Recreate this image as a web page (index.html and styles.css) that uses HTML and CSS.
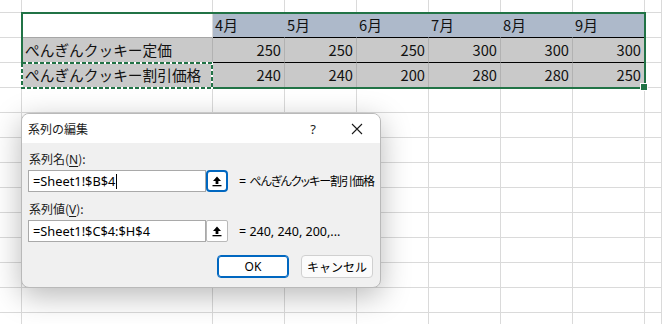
FILE: index.html
```html
<!DOCTYPE html>
<html lang="ja">
<head>
<meta charset="utf-8">
<link rel="stylesheet" href="styles.css">
</head>
<body>
<div class="sheet">
  <div class="grid">
    <!-- row 1 -->
    <div class="c"></div><div class="c"></div><div class="c"></div><div class="c"></div><div class="c"></div><div class="c"></div><div class="c"></div><div class="c"></div><div class="c"></div>
    <!-- header row -->
    <div class="c"></div><div class="c blank"></div>
    <div class="c hd">4月</div><div class="c hd">5月</div><div class="c hd">6月</div><div class="c hd">7月</div><div class="c hd">8月</div><div class="c hd">9月</div>
    <div class="c"></div>
    <!-- price row -->
    <div class="c"></div><div class="c row r4 name">ぺんぎんクッキー定価</div>
    <div class="c row r4 num">250</div><div class="c row r4 num">250</div><div class="c row r4 num">250</div><div class="c row r4 num">300</div><div class="c row r4 num">300</div><div class="c row r4 num">300</div>
    <div class="c"></div>
    <!-- discount row -->
    <div class="c"></div><div class="c row name">ぺんぎんクッキー割引価格</div>
    <div class="c row num">240</div><div class="c row num">240</div><div class="c row num">200</div><div class="c row num">280</div><div class="c row num">280</div><div class="c row num">250</div>
    <div class="c"></div>
    <!-- empty rows -->
    <div class="c"></div><div class="c"></div><div class="c"></div><div class="c"></div><div class="c"></div><div class="c"></div><div class="c"></div><div class="c"></div><div class="c"></div>
    <div class="c"></div><div class="c"></div><div class="c"></div><div class="c"></div><div class="c"></div><div class="c"></div><div class="c"></div><div class="c"></div><div class="c"></div>
    <div class="c"></div><div class="c"></div><div class="c"></div><div class="c"></div><div class="c"></div><div class="c"></div><div class="c"></div><div class="c"></div><div class="c"></div>
    <div class="c"></div><div class="c"></div><div class="c"></div><div class="c"></div><div class="c"></div><div class="c"></div><div class="c"></div><div class="c"></div><div class="c"></div>
    <div class="c"></div><div class="c"></div><div class="c"></div><div class="c"></div><div class="c"></div><div class="c"></div><div class="c"></div><div class="c"></div><div class="c"></div>
    <div class="c"></div><div class="c"></div><div class="c"></div><div class="c"></div><div class="c"></div><div class="c"></div><div class="c"></div><div class="c"></div><div class="c"></div>
    <div class="c"></div><div class="c"></div><div class="c"></div><div class="c"></div><div class="c"></div><div class="c"></div><div class="c"></div><div class="c"></div><div class="c"></div>
    <div class="c"></div><div class="c"></div><div class="c"></div><div class="c"></div><div class="c"></div><div class="c"></div><div class="c"></div><div class="c"></div><div class="c"></div>
    <div class="c"></div><div class="c"></div><div class="c"></div><div class="c"></div><div class="c"></div><div class="c"></div><div class="c"></div><div class="c"></div><div class="c"></div>
    <div class="c"></div><div class="c"></div><div class="c"></div><div class="c"></div><div class="c"></div><div class="c"></div><div class="c"></div><div class="c"></div><div class="c"></div>
  </div>

  <div class="selection"></div>
  <div class="handle"></div>
  <svg class="ants" width="192" height="27" viewBox="0 0 192 27">
    <rect x="1" y="1" width="190" height="25" fill="none" stroke="#ffffff" stroke-width="2"/>
    <rect x="1" y="1" width="190" height="25" fill="none" stroke="#217346" stroke-width="2" stroke-dasharray="4 2"/>
  </svg>

  <div class="dialog">
    <div class="titlebar">
      <div class="title">系列の編集</div>
      <div class="tb-btn">?</div>
      <div class="tb-btn">
        <svg width="12" height="12" viewBox="0 0 12 12"><path d="M1 1L11 11M11 1L1 11" stroke="#1a1a1a" stroke-width="1.1" fill="none"/></svg>
      </div>
    </div>
    <div class="body">
      <div class="label">系列名(<u>N</u>):</div>
      <div class="field-row">
        <div class="input">=Sheet1!$B$4<span class="caret"></span></div>
        <div class="pick focus">
          <svg width="12" height="12" viewBox="0 0 12 12"><path d="M6 1.5L2 6H4.6V9H7.4V6H10Z" fill="#000"/><rect x="1.5" y="10" width="9" height="1.3" fill="#000"/></svg>
        </div>
        <div class="preview">= <span class="jp">ぺんぎんクッキー割引価格</span></div>
      </div>
      <div class="label second">系列値(<u>V</u>):</div>
      <div class="field-row">
        <div class="input">=Sheet1!$C$4:$H$4</div>
        <div class="pick">
          <svg width="12" height="12" viewBox="0 0 12 12"><path d="M6 1.5L2 6H4.6V9H7.4V6H10Z" fill="#000"/><rect x="1.5" y="10" width="9" height="1.3" fill="#000"/></svg>
        </div>
        <div class="preview">= 240, 240, 200,...</div>
      </div>
      <div class="buttons">
        <div class="btn primary">OK</div>
        <div class="btn">キャンセル</div>
      </div>
    </div>
  </div>
</div>
</body>
</html>
```

FILE: styles.css
```css
html, body {
  margin: 0;
  padding: 0;
  background: #ffffff;
}

.sheet {
  position: relative;
  width: 662px;
  height: 324px;
  overflow: hidden;
  font-family: "Noto Sans CJK JP", "Noto Sans", sans-serif;
  color: #111111;
}

.grid {
  display: grid;
  grid-template-columns: 22px 191px repeat(6, 72px) 1fr;
  grid-template-rows: 13px repeat(13, 25px);
}

.c {
  box-sizing: border-box;
  border-right: 1px solid #dadada;
  border-bottom: 1px solid #dadada;
  font-size: 14.7px;
  line-height: 1;
  display: flex;
  align-items: center;
  white-space: nowrap;
  overflow: hidden;
}

.blank {
  border-bottom-color: #a6a6a6;
}

.hd {
  background: #adb9ca;
  border-right-color: #adb9ca;
  border-bottom-color: #000000;
  padding-left: 2px;
}

.row {
  background: #c9c9c9;
  border-right-color: #b2b2b2;
}

.r4 {
  border-bottom-color: #000000;
}

.name {
  padding-left: 3px;
}

.num {
  justify-content: flex-end;
  padding-right: 3px;
}

.selection {
  position: absolute;
  left: 21px;
  top: 12px;
  width: 625px;
  height: 77px;
  box-sizing: border-box;
  border: 2px solid #217346;
}

.handle {
  position: absolute;
  left: 640px;
  top: 83px;
  width: 6px;
  height: 6px;
  background: #217346;
  border: 1px solid #ffffff;
}

.ants {
  position: absolute;
  left: 21px;
  top: 62px;
}

/* dialog */
.dialog {
  position: absolute;
  left: 21px;
  top: 113px;
  width: 360px;
  height: 175px;
  box-sizing: border-box;
  border: 1px solid #b9b9b9;
  border-radius: 8px;
  background: #f0f0f0;
  overflow: hidden;
  box-shadow: 0 8px 30px rgba(0, 0, 0, 0.28);
  font-family: "Noto Sans", "Noto Sans CJK JP", sans-serif;
  font-size: 12px;
  color: #1a1a1a;
}

.titlebar {
  height: 29px;
  background: #ffffff;
  display: flex;
  align-items: center;
  padding-left: 6px;
  padding-right: 1px;
}

.title {
  flex: 1;
  font-family: "Noto Sans CJK JP", sans-serif;
  font-size: 12px;
}

.tb-btn {
  width: 44px;
  height: 29px;
  display: flex;
  align-items: center;
  justify-content: center;
  font-size: 13px;
}

.body {
  padding: 8px 6px 0 6px;
  display: flex;
  flex-direction: column;
}

.label {
  height: 16px;
  line-height: 16px;
  padding-left: 1px;
  font-family: "Noto Sans CJK JP", sans-serif;
  font-size: 12px;
}

.label u {
  font-family: "Noto Sans", sans-serif;
  text-underline-offset: 2px;
}

.label.second {
  margin-top: 9px;
}

.field-row {
  margin-top: 3px;
  display: flex;
  align-items: center;
  height: 22px;
}

.input {
  flex: 0 0 auto;
  box-sizing: border-box;
  width: 178px;
  height: 22px;
  background: #ffffff;
  border: 1px solid #a9a9a9;
  display: flex;
  align-items: center;
  padding-left: 4px;
  font-size: 12.8px;
  color: #000000;
}

.caret {
  display: inline-block;
  width: 1px;
  height: 15px;
  background: #000000;
  margin-left: 1px;
}

.pick {
  flex: 0 0 auto;
  box-sizing: border-box;
  width: 22px;
  height: 22px;
  background: #ffffff;
  border: 1px solid #b9b9b9;
  border-radius: 2px;
  display: flex;
  align-items: center;
  justify-content: center;
}

.pick.focus {
  border: 2px solid #0067c0;
  border-radius: 4px;
}

.preview {
  flex: 0 0 auto;
  margin-left: 11px;
  font-family: "Noto Sans", "Noto Sans CJK JP", sans-serif;
  font-size: 12.5px;
  color: #000000;
  white-space: nowrap;
}

.preview .jp {
  font-family: "Noto Sans CJK JP", sans-serif;
  font-feature-settings: "palt";
  font-size: 12px;
  letter-spacing: -1px;
}

.buttons {
  margin-top: 13px;
  display: flex;
  justify-content: flex-end;
  gap: 12px;
  padding-right: 1px;
}

.btn {
  box-sizing: border-box;
  width: 72px;
  height: 23px;
  border: 1px solid #d0d0d0;
  border-radius: 4px;
  background: #fbfbfb;
  display: flex;
  align-items: center;
  justify-content: center;
  font-family: "Noto Sans CJK JP", sans-serif;
  font-size: 12px;
  color: #000000;
}

.btn.primary {
  border: 1px solid #0067c0;
  box-shadow: inset 0 0 0 1px #0067c0;
  background: #ffffff;
  font-family: "Noto Sans", sans-serif;
}
```
